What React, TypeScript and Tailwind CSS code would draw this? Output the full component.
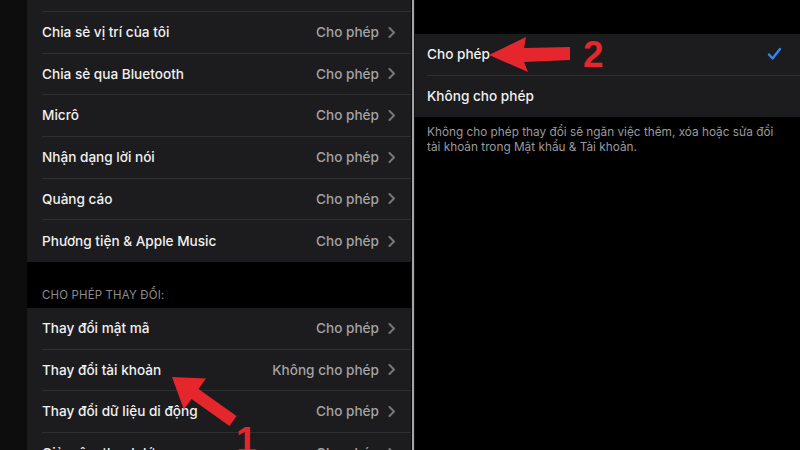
import React from "react";

const font = {fontFamily: "Inter, 'Noto Sans', 'DejaVu Sans', sans-serif"};

type Row = { label: string; value: string };

const privacyRows: Row[] = [
    {label: "Chia sẻ vị trí của tôi", value: "Cho phép"},
    {label: "Chia sẻ qua Bluetooth", value: "Cho phép"},
    {label: "Micrô", value: "Cho phép"},
    {label: "Nhận dạng lời nói", value: "Cho phép"},
    {label: "Quảng cáo", value: "Cho phép"},
    {label: "Phương tiện & Apple Music", value: "Cho phép"},
];

const changeRows: Row[] = [
    {label: "Thay đổi mật mã", value: "Cho phép"},
    {label: "Thay đổi tài khoản", value: "Không cho phép"},
    {label: "Thay đổi dữ liệu di động", value: "Cho phép"},
    {label: "Giảm âm thanh lớn", value: "Cho phép"},
];

function Chevron() {
    return (
        <svg width="8" height="11" viewBox="0 0 8 11" className="shrink-0">
            <path d="M1.5 1 L6 5.5 L1.5 10" fill="none" stroke="#77777a" strokeWidth="2" strokeLinecap="round"
                  strokeLinejoin="round"/>
        </svg>
    );
}

function SettingRow({row, last}: { row: Row; last?: boolean }) {
    return (
        <div className="h-[41.67px] shrink-0 pl-[15px]">
            <div
                className={`flex h-full items-center justify-between pr-[15px] ${last ? "" : "border-b border-[#2f2f31]"}`}>
                <span className="text-[13.6px] font-medium text-[#f0f0f0]">{row.label}</span>
                <span className="flex items-center gap-[9px]">
                    <span className="text-[13.6px] font-medium text-[#a3a3a6]">{row.value}</span>
                    <Chevron/>
                </span>
            </div>
        </div>
    );
}

export default function App() {
    return (
        <div className="relative flex h-[450px] w-[800px] overflow-hidden bg-black" style={font}>
            <div className="w-[27px] shrink-0 bg-[#0d0d0d]"/>

            <div className="flex w-[384px] shrink-0 flex-col">
                <div className="h-[12px] shrink-0 bg-[#1c1c1e] pl-[15px]">
                    <div className="h-full border-b border-[#2f2f31]"/>
                </div>
                <div className="flex flex-col bg-[#1c1c1e]">
                    {privacyRows.map((row, i) => (
                        <SettingRow key={row.label} row={row} last={i === privacyRows.length - 1}/>
                    ))}
                </div>
                <div className="flex h-[46px] shrink-0 items-end pb-[4px] pl-[15px]">
                    <span className="text-[11.4px] uppercase tracking-[0.2px] text-[#8d8d91]">Cho phép thay đổi:</span>
                </div>
                <div className="flex flex-col bg-[#1c1c1e]">
                    {changeRows.map((row) => (
                        <SettingRow key={row.label} row={row}/>
                    ))}
                </div>
            </div>

            <div className="flex w-[4px] shrink-0">
                <div className="w-px bg-[#0a0a0a]"/>
                <div className="w-[2px] bg-[#a4a4a6]"/>
                <div className="w-px bg-[#151515]"/>
            </div>

            <div className="flex flex-1 flex-col pt-[34px]">
                <div className="bg-[#1c1c1e]">
                    <div className="h-[41.67px] pl-[12px]">
                        <div className="flex h-full items-center justify-between border-b border-[#2f2f31] pr-[18px]">
                            <span className="text-[13.6px] font-medium text-[#f0f0f0]">Cho phép</span>
                            <svg width="15" height="14" viewBox="0 0 15 14">
                                <path d="M2 7.5 L5.5 11.5 L13 2" fill="none" stroke="#2f86f2" strokeWidth="2.4"
                                      strokeLinecap="round" strokeLinejoin="round"/>
                            </svg>
                        </div>
                    </div>
                    <div className="flex h-[41.67px] items-center pl-[12px]">
                        <span className="text-[13.6px] font-medium text-[#f0f0f0]">Không cho phép</span>
                    </div>
                </div>
                <p className="mt-[8px] pl-[12px] pr-[20px] text-[11.8px] leading-[15px] text-[#9a9a9e]">
                    Không cho phép thay đổi sẽ ngăn việc thêm, xóa hoặc sửa đổi
                    <br/>
                    tài khoản trong Mật khẩu &amp; Tài khoản.
                </p>
            </div>

            {/* annotation arrows */}
            <svg className="pointer-events-none absolute inset-0" width="800" height="450" viewBox="0 0 800 450">
                <polygon
                    points="489,55 526,37 524,48 570,47 570,60 524,62 528,72"
                    fill="#e5262d"
                />
                <polygon
                    points="172,377 206,378.6 198.5,389.1 236.5,416.1 229.5,425.9 191.5,398.9 183.9,409.4"
                    fill="#e5262d"
                />
            </svg>
            <span
                className="pointer-events-none absolute left-[583px] top-[36px] text-[37px] font-bold leading-none text-[#e5262d]"
                style={{fontFamily: "'Liberation Sans', Arial, sans-serif"}}
            >
                2
            </span>
            <span
                className="pointer-events-none absolute left-[236px] top-[422px] text-[37px] font-bold leading-none text-[#e5262d]"
                style={{fontFamily: "'Liberation Sans', Arial, sans-serif"}}
            >
                1
            </span>
        </div>
    );
}
